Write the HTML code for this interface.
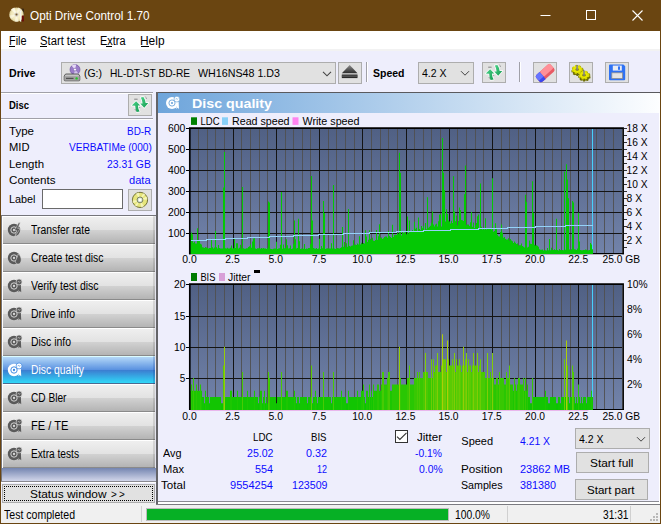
<!DOCTYPE html>
<html><head><meta charset="utf-8"><title>Opti Drive Control 1.70</title>
<style>
html,body{margin:0;padding:0;}
body{width:661px;height:524px;overflow:hidden;position:relative;background:#6a4511;font-family:"Liberation Sans",sans-serif;}
.t{position:absolute;white-space:nowrap;line-height:1;transform-origin:0 0;}
.r{position:absolute;box-sizing:border-box;}
svg{position:absolute;overflow:visible;}
svg text{font-family:"Liberation Sans",sans-serif;}
</style></head><body>
<div class="r" style="left:0px;top:0px;width:661px;height:524px;background:#6a4511;"></div>
<div class="t" style="left:30.10px;top:9.84px;font-size:12px;color:#fff;transform:scaleX(0.9792);">Opti Drive Control 1.70</div>
<svg style="left:8px;top:6px" width="18" height="18" viewBox="0 0 18 18">
<defs><radialGradient id="dg" cx="0.5" cy="0.5" r="0.5"><stop offset="0" stop-color="#fbf6dc"/><stop offset="0.7" stop-color="#f1e8bc"/><stop offset="1" stop-color="#d8cc98"/></radialGradient></defs>
<path d="M13.6 2.4 L16 2.8 V9.6 H13.6 Z" fill="#3a2814"/>
<circle cx="8.5" cy="8.6" r="7.2" fill="url(#dg)"/>
<path d="M8.5 8.6 L3 3.6 A7.4 7.4 0 0 1 6.4 1.6 Z" fill="#fffdf0" opacity="0.8"/>
<path d="M8.5 8.6 L10 1.5 A7.4 7.4 0 0 1 13 2.9 Z" fill="#fffdf0" opacity="0.6"/>
<path d="M8.5 8.6 L1.3 9.6 A7.4 7.4 0 0 0 2.8 13 Z" fill="#fffdf0" opacity="0.55"/>
<path d="M8.5 8.6 L6.6 15.6 A7.4 7.4 0 0 0 10.4 15.6 Z" fill="#fffdf0" opacity="0.6"/>
<circle cx="8.5" cy="8.6" r="2.1" fill="#d4d0c8"/><circle cx="8.5" cy="8.6" r="1" fill="#7a5a28"/>
<path d="M11.9 3.4 C11.6 5 11.8 6 12.2 6.6 L11.9 15.6 L13.2 15.8 L13.3 6.6 C13.8 6 13.9 5 13.6 3.2 L13.1 4.8 L12.5 4.8 Z" fill="#f4f4f4"/>
<rect x="13.8" y="9.4" width="2.1" height="6" rx="0.6" fill="#6c0c0c"/>
</svg>
<svg style="left:530px;top:0px" width="131" height="31" viewBox="0 0 131 31">
<path d="M10.5 15.5 H20.5" stroke="#fff" stroke-width="1" fill="none"/>
<rect x="56.5" y="10.5" width="9" height="9" stroke="#fff" stroke-width="1" fill="none"/>
<path d="M102.5 10.5 L112.5 20.5 M112.5 10.5 L102.5 20.5" stroke="#fff" stroke-width="1.1" fill="none"/>
</svg>
<div class="r" style="left:1px;top:31px;width:659px;height:19px;background:#fff;"></div>
<div class="r" style="left:1px;top:49px;width:659px;height:2px;background:#f2f2f2;"></div>
<div class="t" style="left:8.60px;top:35.44px;font-size:12px;color:#000;transform:scaleX(0.9051);">File</div>
<div class="t" style="left:40.30px;top:35.44px;font-size:12px;color:#000;transform:scaleX(0.9372);">Start test</div>
<div class="t" style="left:100.40px;top:35.44px;font-size:12px;color:#000;transform:scaleX(0.9105);">Extra</div>
<div class="t" style="left:140.40px;top:35.44px;font-size:12px;color:#000;transform:scaleX(0.9928);">Help</div>
<div class="r" style="left:9px;top:46px;width:6px;height:1px;background:#000;"></div>
<div class="r" style="left:40px;top:46px;width:7px;height:1px;background:#000;"></div>
<div class="r" style="left:106px;top:46px;width:6px;height:1px;background:#000;"></div>
<div class="r" style="left:141px;top:46px;width:8px;height:1px;background:#000;"></div>
<div class="r" style="left:1px;top:51px;width:659px;height:472px;background:#eeeefc;"></div>
<div class="t" style="left:9.30px;top:67.69px;font-size:11px;color:#000;font-weight:bold;transform:scaleX(0.9631);">Drive</div>
<div class="r" style="left:61px;top:62px;width:275px;height:22px;background:#e1e1e1;border:1px solid #adadad;"></div>
<div class="t" style="left:84.00px;top:68.49px;font-size:11px;color:#000;transform:scaleX(0.9505);">(G:)</div>
<div class="t" style="left:110.30px;top:68.49px;font-size:11px;color:#000;transform:scaleX(0.9240);">HL-DT-ST BD-RE</div>
<div class="t" style="left:197.50px;top:68.49px;font-size:11px;color:#000;transform:scaleX(0.9719);">WH16NS48 1.D3</div>
<svg style="left:322px;top:70px" width="10" height="7" viewBox="0 0 10 7"><path d="M1 1.8 L5 5.8 L9 1.8" stroke="#444" stroke-width="1.1" fill="none"/></svg>
<svg style="left:63px;top:63px" width="18" height="19" viewBox="0 0 18 19">
<circle cx="12" cy="6.6" r="5" fill="#9a7cc8" stroke="#6a4c9a" stroke-width="0.6"/>
<path d="M12 6.6 L8.6 2.8 A5 5 0 0 1 13.2 1.7 Z" fill="#e6daf6"/><path d="M12 6.6 L15.4 10.4 A5 5 0 0 1 10.8 11.5 Z" fill="#d4c4ee"/>
<circle cx="12" cy="6.6" r="1.4" fill="#fff" stroke="#6a4c9a" stroke-width="0.5"/>
<path d="M2.6 11 H15.4 L16.8 13 V17 a0.8 0.8 0 0 1 -0.8 0.8 H2 a0.8 0.8 0 0 1 -0.8 -0.8 V13 Z" fill="#c4c4c4" stroke="#505050" stroke-width="0.9"/>
<rect x="1.6" y="13.2" width="14.8" height="4.2" fill="#a0a0a0"/>
<rect x="3" y="14.8" width="7.5" height="1.2" fill="#505050"/>
<circle cx="13.6" cy="15.4" r="1.2" fill="#20c828"/>
</svg>
<div class="r" style="left:338px;top:62px;width:24px;height:22px;background:#e1e1e1;border:1px solid #adadad;"></div>
<svg style="left:338px;top:62px" width="24" height="22" viewBox="0 0 24 22"><defs><linearGradient id="ej" x1="0" y1="0" x2="0" y2="1"><stop offset="0" stop-color="#8c8c8c"/><stop offset="1" stop-color="#2c2c2c"/></linearGradient></defs><path d="M11.7 3 L19.5 11.3 H3.8 Z" fill="url(#ej)"/><rect x="3.8" y="12.5" width="15.7" height="3.6" fill="#2a2a2a"/><rect x="3.8" y="13.6" width="15.7" height="1" fill="#6a6a6a"/></svg>
<div class="r" style="left:366px;top:62px;width:1px;height:20px;background:#a0a0a8;"></div>
<div class="r" style="left:367px;top:62px;width:1px;height:20px;background:#fff;"></div>
<div class="t" style="left:373.00px;top:67.69px;font-size:11px;color:#000;font-weight:bold;transform:scaleX(0.9543);">Speed</div>
<div class="r" style="left:418px;top:62px;width:56px;height:22px;background:#e1e1e1;border:1px solid #adadad;"></div>
<div class="t" style="left:422.00px;top:67.69px;font-size:11px;color:#000;transform:scaleX(0.9539);">4.2 X</div>
<svg style="left:460px;top:70px" width="10" height="7" viewBox="0 0 10 7"><path d="M1 1.2 L5 5.2 L9 1.2" stroke="#444" stroke-width="1" fill="none"/></svg>
<div class="r" style="left:482px;top:62px;width:24px;height:21px;background:#e1e1e1;border:1px solid #adadad;"></div>
<svg style="left:482px;top:62px" width="24" height="21" viewBox="0 0 24 21"><defs><linearGradient id="ga" x1="0" y1="0" x2="1" y2="1"><stop offset="0" stop-color="#4cd48a"/><stop offset="1" stop-color="#149a50"/></linearGradient></defs><g stroke-linejoin="round"><path d="M8.1 7.2 L12.2 11.6 L9.9 11.6 Q10 15 11.6 17.6 L8.6 18 Q7.2 15 7.2 11.8 L3.8 11.6 Z M16.2 13.8 L12.2 9.6 L14.6 9.4 Q14.4 6 12.8 3.4 L15.4 3.1 Q17.4 6 17.6 9 L20.3 8.9 Z" fill="#fff" stroke="#fff" stroke-width="1.6" opacity="0.85"/><path d="M8.1 7.2 L12.2 11.6 L9.9 11.6 Q10 15 11.6 17.6 L8.6 18 Q7.2 15 7.2 11.8 L3.8 11.6 Z" fill="url(#ga)"/><path d="M16.2 13.8 L12.2 9.6 L14.6 9.4 Q14.4 6 12.8 3.4 L15.4 3.1 Q17.4 6 17.6 9 L20.3 8.9 Z" fill="url(#ga)"/><path d="M6.2 5.2 H9.6" stroke="#444" stroke-width="0.6"/><path d="M17.6 2.8 L18.6 4.8 M7 15 L8 17.6 M11.6 13.4 L12.2 14.2" stroke="#333" stroke-width="0.6" stroke-dasharray="0.8 0.8"/></g></svg>
<div class="r" style="left:519px;top:62px;width:1px;height:20px;background:#a0a0a8;"></div>
<div class="r" style="left:520px;top:62px;width:1px;height:20px;background:#fff;"></div>
<div class="r" style="left:533px;top:62px;width:24px;height:21px;background:#e1e1e1;border:1px solid #adadad;"></div>
<svg style="left:533px;top:62px" width="24" height="21" viewBox="0 0 24 21"><g transform="translate(12.2 11.2) rotate(-42)"><rect x="-9.8" y="-4.6" width="19.6" height="9.2" rx="2.4" fill="#e85a64"/><rect x="-3.4" y="-4.6" width="13.2" height="6.4" rx="1.6" fill="#ff9098"/><path d="M-7.4 -4.6 H-3.4 V4.6 H-7.4 A2.4 2.4 0 0 1 -9.8 2.2 V-2.2 A2.4 2.4 0 0 1 -7.4 -4.6 Z" fill="#3a48ee"/><path d="M-7.4 -4.6 H-3.4 V1.4 H-9.8 V-2.2 A2.4 2.4 0 0 1 -7.4 -4.6 Z" fill="#6674ff"/></g></svg>
<div class="r" style="left:569px;top:62px;width:24px;height:21px;background:#e1e1e1;border:1px solid #adadad;"></div>
<svg style="left:569px;top:62px" width="24" height="21" viewBox="0 0 24 21"><g><ellipse cx="8.6" cy="8.8" rx="5.4" ry="4.4" fill="#6e6e00" stroke="#6e6e00" stroke-width="1.6" stroke-dasharray="2 1.4"/><ellipse cx="15.4" cy="14.4" rx="5.4" ry="4.4" fill="#6e6e00" stroke="#6e6e00" stroke-width="1.6" stroke-dasharray="2 1.4"/><ellipse cx="8.2" cy="7.4" rx="4.6" ry="3.7" fill="#e8e800" stroke="#d8d800" stroke-width="1.8" stroke-dasharray="2 1.4"/><ellipse cx="15" cy="13" rx="4.6" ry="3.7" fill="#e8e800" stroke="#d8d800" stroke-width="1.8" stroke-dasharray="2 1.4"/><ellipse cx="8.2" cy="7.6" rx="1.8" ry="1.4" fill="#8a8a20"/><ellipse cx="15" cy="13.2" rx="1.8" ry="1.4" fill="#8a8a20"/><rect x="7.5" y="3.2" width="1.4" height="4.6" fill="#9a9a9a" stroke="#666" stroke-width="0.3"/><rect x="14.3" y="8.8" width="1.4" height="4.6" fill="#9a9a9a" stroke="#666" stroke-width="0.3"/></g></svg>
<div class="r" style="left:605px;top:62px;width:24px;height:21px;background:#e1e1e1;border:1px solid #adadad;"></div>
<svg style="left:605px;top:62px" width="24" height="21" viewBox="0 0 24 21"><path d="M5 2.4 H18.4 L20.2 4.2 V17.2 a1 1 0 0 1 -1 1 H5 a1 1 0 0 1 -1 -1 V3.4 a1 1 0 0 1 1 -1 Z" fill="#2f72f4"/><rect x="7.8" y="3.6" width="9" height="5" fill="#e8ecf4"/><rect x="13" y="4.4" width="2" height="3.4" fill="#2f72f4"/><rect x="6.8" y="10.8" width="10.6" height="5.6" fill="#e4e4e4" stroke="#909090" stroke-width="0.8"/></svg>
<div class="r" style="left:1px;top:92px;width:152px;height:1px;background:#a0a0a8;"></div>
<div class="r" style="left:1px;top:93px;width:152px;height:1px;background:#fff;"></div>
<div class="t" style="left:9.30px;top:99.69px;font-size:11px;color:#000;font-weight:bold;transform:scaleX(0.8608);">Disc</div>
<div class="r" style="left:128px;top:94px;width:24px;height:22px;background:#e1e1e1;border:1px solid #adadad;"></div>
<svg style="left:128px;top:94px" width="24" height="21" viewBox="0 0 24 21"><defs><linearGradient id="ga" x1="0" y1="0" x2="1" y2="1"><stop offset="0" stop-color="#4cd48a"/><stop offset="1" stop-color="#149a50"/></linearGradient></defs><g stroke-linejoin="round"><path d="M8.1 7.2 L12.2 11.6 L9.9 11.6 Q10 15 11.6 17.6 L8.6 18 Q7.2 15 7.2 11.8 L3.8 11.6 Z M16.2 13.8 L12.2 9.6 L14.6 9.4 Q14.4 6 12.8 3.4 L15.4 3.1 Q17.4 6 17.6 9 L20.3 8.9 Z" fill="#fff" stroke="#fff" stroke-width="1.6" opacity="0.85"/><path d="M8.1 7.2 L12.2 11.6 L9.9 11.6 Q10 15 11.6 17.6 L8.6 18 Q7.2 15 7.2 11.8 L3.8 11.6 Z" fill="url(#ga)"/><path d="M16.2 13.8 L12.2 9.6 L14.6 9.4 Q14.4 6 12.8 3.4 L15.4 3.1 Q17.4 6 17.6 9 L20.3 8.9 Z" fill="url(#ga)"/><path d="M6.2 5.2 H9.6" stroke="#444" stroke-width="0.6"/><path d="M17.6 2.8 L18.6 4.8 M7 15 L8 17.6 M11.6 13.4 L12.2 14.2" stroke="#333" stroke-width="0.6" stroke-dasharray="0.8 0.8"/></g></svg>
<div class="r" style="left:1px;top:118px;width:152px;height:1px;background:#a0a0a8;"></div>
<div class="r" style="left:1px;top:119px;width:152px;height:1px;background:#fff;"></div>
<div class="t" style="left:9.30px;top:125.69px;font-size:11px;color:#000;transform:scaleX(1.0484);">Type</div>
<div class="t" style="left:126.80px;top:125.69px;font-size:11px;color:#0c0cff;transform:scaleX(0.9037);">BD-R</div>
<div class="t" style="left:9.30px;top:141.69px;font-size:11px;color:#000;transform:scaleX(1.0167);">MID</div>
<div class="t" style="left:68.80px;top:141.69px;font-size:11px;color:#0c0cff;transform:scaleX(0.9173);">VERBATIMe (000)</div>
<div class="t" style="left:9.30px;top:158.69px;font-size:11px;color:#000;transform:scaleX(1.0404);">Length</div>
<div class="t" style="left:107.30px;top:158.69px;font-size:11px;color:#0c0cff;transform:scaleX(0.9425);">23.31 GB</div>
<div class="t" style="left:9.30px;top:174.69px;font-size:11px;color:#000;transform:scaleX(1.0562);">Contents</div>
<div class="t" style="left:129.00px;top:174.69px;font-size:11px;color:#0c0cff;transform:scaleX(1.0090);">data</div>
<div class="t" style="left:9.30px;top:193.99px;font-size:11px;color:#000;transform:scaleX(0.9847);">Label</div>
<div class="r" style="left:42px;top:189px;width:81px;height:20px;background:#fff;border:1px solid #6a6a6a;"></div>
<div class="r" style="left:128px;top:189px;width:24px;height:22px;background:#e1e1e1;border:1px solid #adadad;"></div>
<svg style="left:131px;top:191px" width="18" height="18" viewBox="0 0 18 18"><circle cx="9" cy="8.9" r="7.6" fill="#e6e67c" stroke="#66662c" stroke-width="0.9"/><path d="M9 8.9 L5 2.6 A7.4 7.4 0 0 1 8 1.5 Z M9 8.9 L13 15.2 A7.4 7.4 0 0 1 10 16.3 Z M9 8.9 L15.6 5.6 A7.4 7.4 0 0 1 16.4 8.4 Z M9 8.9 L2.4 12.2 A7.4 7.4 0 0 1 1.6 9.4 Z M9 8.9 L12.2 2.2 A7.4 7.4 0 0 1 14.2 3.6 Z M9 8.9 L5.8 15.6 A7.4 7.4 0 0 1 3.8 14.2 Z" fill="#fafac8" opacity="0.75"/><circle cx="9" cy="8.9" r="2.9" fill="#d8e4d0" stroke="#707858" stroke-width="0.9"/><circle cx="9" cy="8.9" r="1.4" fill="#fff"/></svg>
<div class="r" style="left:1px;top:215px;width:155px;height:267px;background:#74747a;"></div>
<div class="r" style="left:155px;top:216px;width:1px;height:252px;background:#e4e4ee;"></div>
<div class="r" style="left:2px;top:216px;width:153px;height:28px;border-left:1px solid #fff;border-right:2px solid rgba(0,0,0,0.10);background:linear-gradient(#fff 0,#fff 1px,#efefef 1px,#e2e2e2 14px,#d2d2d2 14px,#b4b4b4 27px,#8a8a8a 27px,#8a8a8a 28px);"></div>
<svg style="left:3.5999999999999996px;top:220.2px" width="20" height="20" viewBox="-10 -10 20 20"><g transform="scale(1.033)"><circle cx="0" cy="0" r="6" fill="#5a5a5a"/><circle cx="0" cy="0" r="3.1" fill="none" stroke="#d8d8d8" stroke-width="0.9"/><circle cx="0" cy="0" r="1.1" fill="#d8d8d8"/><path d="M4.5 -7 L0.5 0.5 L2.6 0.5 L0.8 6.5 L6 -1.5 L3.6 -1.5 L6 -7 Z" fill="#5a5a5a" stroke="#d8d8d8" stroke-width="0.5"/></g></svg>
<div class="t" style="left:31.30px;top:224.22px;font-size:12.5px;color:#000;transform:scaleX(0.8300);">Transfer rate</div>
<div class="r" style="left:2px;top:244px;width:153px;height:28px;border-left:1px solid #fff;border-right:2px solid rgba(0,0,0,0.10);background:linear-gradient(#fff 0,#fff 1px,#efefef 1px,#e2e2e2 14px,#d2d2d2 14px,#b4b4b4 27px,#8a8a8a 27px,#8a8a8a 28px);"></div>
<svg style="left:3.5999999999999996px;top:248.2px" width="20" height="20" viewBox="-10 -10 20 20"><g transform="scale(1.033)"><circle cx="0" cy="0" r="6" fill="#5a5a5a"/><circle cx="0" cy="0" r="3.1" fill="none" stroke="#d8d8d8" stroke-width="0.9"/><circle cx="0" cy="0" r="1.1" fill="#d8d8d8"/><path d="M4 -4 C7 -2 7.5 2 6.5 4 C5.5 6.5 2 6.5 1.5 4 C1 2 3 1 4 -4 Z" fill="#5a5a5a" stroke="#d8d8d8" stroke-width="0.6"/></g></svg>
<div class="t" style="left:31.30px;top:252.22px;font-size:12.5px;color:#000;transform:scaleX(0.8349);">Create test disc</div>
<div class="r" style="left:2px;top:272px;width:153px;height:28px;border-left:1px solid #fff;border-right:2px solid rgba(0,0,0,0.10);background:linear-gradient(#fff 0,#fff 1px,#efefef 1px,#e2e2e2 14px,#d2d2d2 14px,#b4b4b4 27px,#8a8a8a 27px,#8a8a8a 28px);"></div>
<svg style="left:3.5999999999999996px;top:276.2px" width="20" height="20" viewBox="-10 -10 20 20"><g transform="scale(1.033)"><circle cx="0" cy="0" r="6" fill="#5a5a5a"/><circle cx="0" cy="0" r="3.1" fill="none" stroke="#d8d8d8" stroke-width="0.9"/><circle cx="0" cy="0" r="1.1" fill="#d8d8d8"/><path d="M5.2 -1.6 L4.2 6 L5.6 4.8 L7 6 L6.6 -1.6 Z" fill="#5a5a5a"/><circle cx="4.9" cy="-3.9" r="2.9" fill="#5a5a5a" stroke="#d8d8d8" stroke-width="0.7"/><path d="M3.5 -3.6 L4.5 -4.8 L5.2 -3.4 L6.2 -4.6" stroke="#d8d8d8" stroke-width="0.5" fill="none"/></g></svg>
<div class="t" style="left:31.30px;top:280.22px;font-size:12.5px;color:#000;transform:scaleX(0.8377);">Verify test disc</div>
<div class="r" style="left:2px;top:300px;width:153px;height:28px;border-left:1px solid #fff;border-right:2px solid rgba(0,0,0,0.10);background:linear-gradient(#fff 0,#fff 1px,#efefef 1px,#e2e2e2 14px,#d2d2d2 14px,#b4b4b4 27px,#8a8a8a 27px,#8a8a8a 28px);"></div>
<svg style="left:3.5999999999999996px;top:304.2px" width="20" height="20" viewBox="-10 -10 20 20"><g transform="scale(1.033)"><circle cx="0" cy="0" r="6" fill="#5a5a5a"/><circle cx="0" cy="0" r="3.1" fill="none" stroke="#d8d8d8" stroke-width="0.9"/><circle cx="0" cy="0" r="1.1" fill="#d8d8d8"/><path d="M5.2 -1.6 L4.2 6 L5.6 4.8 L7 6 L6.6 -1.6 Z" fill="#5a5a5a"/><circle cx="4.9" cy="-3.9" r="2.9" fill="#5a5a5a" stroke="#d8d8d8" stroke-width="0.7"/><path d="M3.5 -3.6 L4.5 -4.8 L5.2 -3.4 L6.2 -4.6" stroke="#d8d8d8" stroke-width="0.5" fill="none"/></g></svg>
<div class="t" style="left:31.30px;top:308.22px;font-size:12.5px;color:#000;transform:scaleX(0.8334);">Drive info</div>
<div class="r" style="left:2px;top:328px;width:153px;height:28px;border-left:1px solid #fff;border-right:2px solid rgba(0,0,0,0.10);background:linear-gradient(#fff 0,#fff 1px,#efefef 1px,#e2e2e2 14px,#d2d2d2 14px,#b4b4b4 27px,#8a8a8a 27px,#8a8a8a 28px);"></div>
<svg style="left:3.5999999999999996px;top:332.2px" width="20" height="20" viewBox="-10 -10 20 20"><g transform="scale(1.033)"><circle cx="0" cy="0" r="6" fill="#5a5a5a"/><circle cx="0" cy="0" r="3.1" fill="none" stroke="#d8d8d8" stroke-width="0.9"/><circle cx="0" cy="0" r="1.1" fill="#d8d8d8"/><path d="M5.2 -1.6 L4.2 6 L5.6 4.8 L7 6 L6.6 -1.6 Z" fill="#5a5a5a"/><circle cx="4.9" cy="-3.9" r="2.9" fill="#5a5a5a" stroke="#d8d8d8" stroke-width="0.7"/><path d="M3.5 -3.6 L4.5 -4.8 L5.2 -3.4 L6.2 -4.6" stroke="#d8d8d8" stroke-width="0.5" fill="none"/></g></svg>
<div class="t" style="left:31.30px;top:336.22px;font-size:12.5px;color:#000;transform:scaleX(0.8346);">Disc info</div>
<div class="r" style="left:2px;top:356px;width:153px;height:28px;border-left:1px solid #c8f0ff;border-right:2px solid rgba(0,40,120,0.18);background:linear-gradient(#dcfcff 0,#dcfcff 1px,#b4d8f8 1px,#5890e0 14px,#3c7cd0 14px,#30d8f8 27px,#4a6a90 27px,#4a6a90 28px);"></div>
<svg style="left:3.5999999999999996px;top:360.2px" width="20" height="20" viewBox="-10 -10 20 20"><g transform="scale(1.033)"><circle cx="0" cy="0" r="6" fill="#fff"/><circle cx="0" cy="0" r="3.1" fill="none" stroke="#3a86e0" stroke-width="0.9"/><circle cx="0" cy="0" r="1.1" fill="#3a86e0"/><path d="M5.2 -1.6 L4.2 6 L5.6 4.8 L7 6 L6.6 -1.6 Z" fill="#fff"/><circle cx="4.9" cy="-3.9" r="2.9" fill="#fff" stroke="#3a86e0" stroke-width="0.7"/><path d="M3.5 -3.6 L4.5 -4.8 L5.2 -3.4 L6.2 -4.6" stroke="#3a86e0" stroke-width="0.5" fill="none"/></g></svg>
<div class="t" style="left:31.30px;top:364.22px;font-size:12.5px;color:#fff;transform:scaleX(0.8293);">Disc quality</div>
<div class="r" style="left:2px;top:384px;width:153px;height:28px;border-left:1px solid #fff;border-right:2px solid rgba(0,0,0,0.10);background:linear-gradient(#fff 0,#fff 1px,#efefef 1px,#e2e2e2 14px,#d2d2d2 14px,#b4b4b4 27px,#8a8a8a 27px,#8a8a8a 28px);"></div>
<svg style="left:3.5999999999999996px;top:388.2px" width="20" height="20" viewBox="-10 -10 20 20"><g transform="scale(1.033)"><circle cx="0" cy="0" r="6" fill="#5a5a5a"/><circle cx="0" cy="0" r="3.1" fill="none" stroke="#d8d8d8" stroke-width="0.9"/><circle cx="0" cy="0" r="1.1" fill="#d8d8d8"/><path d="M5.2 -1.6 L4.2 6 L5.6 4.8 L7 6 L6.6 -1.6 Z" fill="#5a5a5a"/><circle cx="4.9" cy="-3.9" r="2.9" fill="#5a5a5a" stroke="#d8d8d8" stroke-width="0.7"/><path d="M3.5 -3.6 L4.5 -4.8 L5.2 -3.4 L6.2 -4.6" stroke="#d8d8d8" stroke-width="0.5" fill="none"/></g></svg>
<div class="t" style="left:31.30px;top:392.22px;font-size:12.5px;color:#000;transform:scaleX(0.8113);">CD Bler</div>
<div class="r" style="left:2px;top:412px;width:153px;height:28px;border-left:1px solid #fff;border-right:2px solid rgba(0,0,0,0.10);background:linear-gradient(#fff 0,#fff 1px,#efefef 1px,#e2e2e2 14px,#d2d2d2 14px,#b4b4b4 27px,#8a8a8a 27px,#8a8a8a 28px);"></div>
<svg style="left:3.5999999999999996px;top:416.2px" width="20" height="20" viewBox="-10 -10 20 20"><g transform="scale(1.033)"><circle cx="0" cy="0" r="6" fill="#5a5a5a"/><circle cx="0" cy="0" r="3.1" fill="none" stroke="#d8d8d8" stroke-width="0.9"/><circle cx="0" cy="0" r="1.1" fill="#d8d8d8"/><path d="M5.2 -1.6 L4.2 6 L5.6 4.8 L7 6 L6.6 -1.6 Z" fill="#5a5a5a"/><circle cx="4.9" cy="-3.9" r="2.9" fill="#5a5a5a" stroke="#d8d8d8" stroke-width="0.7"/><path d="M3.5 -3.6 L4.5 -4.8 L5.2 -3.4 L6.2 -4.6" stroke="#d8d8d8" stroke-width="0.5" fill="none"/></g></svg>
<div class="t" style="left:31.30px;top:420.22px;font-size:12.5px;color:#000;transform:scaleX(0.8900);">FE / TE</div>
<div class="r" style="left:2px;top:440px;width:153px;height:28px;border-left:1px solid #fff;border-right:2px solid rgba(0,0,0,0.10);background:linear-gradient(#fff 0,#fff 1px,#efefef 1px,#e2e2e2 14px,#d2d2d2 14px,#b4b4b4 27px,#8a8a8a 27px,#8a8a8a 28px);"></div>
<svg style="left:3.5999999999999996px;top:444.2px" width="20" height="20" viewBox="-10 -10 20 20"><g transform="scale(1.033)"><circle cx="0" cy="0" r="6" fill="#5a5a5a"/><circle cx="0" cy="0" r="3.1" fill="none" stroke="#d8d8d8" stroke-width="0.9"/><circle cx="0" cy="0" r="1.1" fill="#d8d8d8"/><path d="M5.2 -1.6 L4.2 6 L5.6 4.8 L7 6 L6.6 -1.6 Z" fill="#5a5a5a"/><circle cx="4.9" cy="-3.9" r="2.9" fill="#5a5a5a" stroke="#d8d8d8" stroke-width="0.7"/><path d="M3.5 -3.6 L4.5 -4.8 L5.2 -3.4 L6.2 -4.6" stroke="#d8d8d8" stroke-width="0.5" fill="none"/></g></svg>
<div class="t" style="left:31.30px;top:448.22px;font-size:12.5px;color:#000;transform:scaleX(0.8130);">Extra tests</div>
<div class="r" style="left:2px;top:468px;width:154px;height:13px;background:linear-gradient(#7485b0,#d2d6ea);"></div>
<div class="r" style="left:1px;top:481px;width:155px;height:1px;background:#8a8a92;"></div>
<div class="r" style="left:1px;top:482px;width:155px;height:1px;background:#fff;"></div>
<div class="r" style="left:2px;top:484px;width:153px;height:19px;background:#e1e1e1;border:1px solid #adadad;"></div>
<div class="r" style="left:4px;top:486px;width:149px;height:15px;border:1px dotted #000;"></div>
<div class="t" style="left:30.00px;top:488.57px;font-size:11.5px;color:#000;transform:scaleX(1.0317);">Status window</div>
<div class="t" style="left:110.70px;top:488.57px;font-size:11.5px;color:#000;transform:scaleX(0.86);">&gt;</div>
<div class="t" style="left:118.50px;top:488.57px;font-size:11.5px;color:#000;transform:scaleX(0.86);">&gt;</div>
<div class="r" style="left:156px;top:92px;width:504px;height:1px;background:#5a5a5e;"></div>
<div class="r" style="left:156px;top:92px;width:2px;height:412px;background:#646468;"></div>
<div class="r" style="left:158px;top:93px;width:501px;height:20px;background:linear-gradient(90deg,#6ea5db,#fdfeff);"></div>
<div class="r" style="left:158px;top:113px;width:501px;height:388px;background:#eeeefc;"></div>
<div class="r" style="left:158px;top:501px;width:502px;height:1px;background:#8a8a92;"></div>
<div class="r" style="left:158px;top:502px;width:502px;height:2px;background:#fff;"></div>
<div class="r" style="left:156px;top:504px;width:504px;height:1px;background:#7a7a80;"></div>
<div class="r" style="left:659px;top:94px;width:1px;height:408px;background:#fff;"></div>
<div class="t" style="left:192.00px;top:96.57px;font-size:13.5px;color:#fff;font-weight:bold;transform:scaleX(1.0559);">Disc quality</div>
<svg style="left:162px;top:93px" width="20" height="20" viewBox="-10 -10 20 20"><g transform="scale(1.000)"><circle cx="0" cy="0" r="6" fill="#fff"/><circle cx="0" cy="0" r="3.1" fill="none" stroke="#6fa6da" stroke-width="0.9"/><circle cx="0" cy="0" r="1.1" fill="#6fa6da"/><path d="M5.2 -1.6 L4.2 6 L5.6 4.8 L7 6 L6.6 -1.6 Z" fill="#fff"/><circle cx="4.9" cy="-3.9" r="2.9" fill="#fff" stroke="#6fa6da" stroke-width="0.7"/><path d="M3.5 -3.6 L4.5 -4.8 L5.2 -3.4 L6.2 -4.6" stroke="#6fa6da" stroke-width="0.5" fill="none"/></g></svg>
<svg style="left:0;top:0" width="661" height="524" viewBox="0 0 661 524">
<defs><linearGradient id="pg" x1="0" y1="0" x2="0" y2="1"><stop offset="0" stop-color="#506084"/><stop offset="1" stop-color="#7283aa"/></linearGradient></defs>
<rect x="190.0" y="128.0" width="432.0" height="126.0" fill="url(#pg)"/>
<path d="M198.5 128.0V254.0M207.5 128.0V254.0M215.5 128.0V254.0M224.5 128.0V254.0M241.5 128.0V254.0M250.5 128.0V254.0M259.5 128.0V254.0M267.5 128.0V254.0M285.5 128.0V254.0M293.5 128.0V254.0M302.5 128.0V254.0M310.5 128.0V254.0M328.5 128.0V254.0M336.5 128.0V254.0M345.5 128.0V254.0M354.5 128.0V254.0M371.5 128.0V254.0M380.5 128.0V254.0M388.5 128.0V254.0M397.5 128.0V254.0M414.5 128.0V254.0M423.5 128.0V254.0M431.5 128.0V254.0M440.5 128.0V254.0M457.5 128.0V254.0M466.5 128.0V254.0M475.5 128.0V254.0M483.5 128.0V254.0M501.5 128.0V254.0M509.5 128.0V254.0M518.5 128.0V254.0M526.5 128.0V254.0M544.5 128.0V254.0M552.5 128.0V254.0M561.5 128.0V254.0M570.5 128.0V254.0M587.5 128.0V254.0M596.5 128.0V254.0M604.5 128.0V254.0M613.5 128.0V254.0" stroke="#505050" stroke-width="1" fill="none" opacity="0.9"/>
<path d="M233.5 128.0V254.0M276.5 128.0V254.0M319.5 128.0V254.0M362.5 128.0V254.0M406.5 128.0V254.0M449.5 128.0V254.0M492.5 128.0V254.0M535.5 128.0V254.0M578.5 128.0V254.0M190.0 149.5H622.0M190.0 170.5H622.0M190.0 191.5H622.0M190.0 212.5H622.0M190.0 233.5H622.0" stroke="#141414" stroke-width="1" fill="none"/>
<path d="M189.0 253.7H624.0" stroke="#000" stroke-width="1.2" fill="none"/>
<path d="M592.5 128.0V254.0" stroke="#48d0fa" stroke-width="1" fill="none"/>
<path d="M190.0 254.0V234.5H191.0V232.5H192.0V234.2H193.0V242.7H194.0V241.8H195.0V243.4H196.0V243.6H197.0V228.3H198.0V240.2H199.0V241.1H200.0V243.7H201.0V244.5H202.0V247.3H203.0V247.5H204.0V248.0H205.0V247.1H206.0V247.5H207.0V248.1H208.0V248.4H209.0V247.9H210.0V248.0H211.0V238.7H212.0V247.2H213.0V248.4H214.0V247.5H215.0V231.1H216.0V247.3H217.0V248.4H218.0V244.9H219.0V247.9H220.0V248.4H221.0V248.5H222.0V248.5H223.0V187.6H224.0V151.9H225.0V248.3H226.0V248.5H227.0V247.7H228.0V248.6H229.0V248.5H230.0V247.8H231.0V245.6H232.0V248.5H233.0V248.3H234.0V238.2H235.0V248.1H236.0V243.2H237.0V243.2H238.0V248.6H239.0V247.8H240.0V244.7H241.0V248.6H242.0V187.0H243.0V248.2H244.0V248.7H245.0V248.8H246.0V248.3H247.0V248.2H248.0V246.9H249.0V246.2H250.0V244.3H251.0V247.8H252.0V241.4H253.0V238.4H254.0V238.2H255.0V248.6H256.0V248.9H257.0V248.2H258.0V248.2H259.0V248.1H260.0V248.7H261.0V248.0H262.0V248.6H263.0V248.1H264.0V248.4H265.0V248.4H266.0V249.0H267.0V248.0H268.0V201.5H269.0V202.6H270.0V248.7H271.0V249.1H272.0V249.2H273.0V248.7H274.0V248.4H275.0V248.5H276.0V241.7H277.0V249.0H278.0V248.5H279.0V248.2H280.0V244.8H281.0V192.1H282.0V248.8H283.0V244.6H284.0V248.2H285.0V248.1H286.0V239.3H287.0V245.3H288.0V248.6H289.0V248.2H290.0V245.4H291.0V249.1H292.0V248.5H293.0V243.7H294.0V220.4H295.0V239.2H296.0V248.4H297.0V248.1H298.0V218.7H299.0V241.3H300.0V248.9H301.0V248.4H302.0V248.5H303.0V248.7H304.0V243.9H305.0V249.0H306.0V248.4H307.0V248.7H308.0V248.1H309.0V248.0H310.0V244.1H311.0V176.1H312.0V220.4H313.0V248.0H314.0V248.5H315.0V248.8H316.0V248.1H317.0V249.0H318.0V248.5H319.0V238.8H320.0V248.9H321.0V246.1H322.0V248.3H323.0V201.1H324.0V213.1H325.0V249.0H326.0V248.5H327.0V248.2H328.0V248.5H329.0V248.4H330.0V248.6H331.0V243.3H332.0V248.5H333.0V184.9H334.0V248.5H335.0V249.0H336.0V248.5H337.0V248.1H338.0V248.3H339.0V248.6H340.0V248.0H341.0V247.2H342.0V227.1H343.0V246.8H344.0V242.1H345.0V247.5H346.0V243.3H347.0V246.8H348.0V209.1H349.0V246.1H350.0V246.4H351.0V245.8H352.0V245.6H353.0V240.2H354.0V244.9H355.0V244.5H356.0V245.0H357.0V243.6H358.0V244.4H359.0V236.2H360.0V244.4H361.0V242.8H362.0V244.1H363.0V243.1H364.0V243.6H365.0V230.3H366.0V236.4H367.0V242.0H368.0V239.8H369.0V230.3H370.0V238.7H371.0V240.1H372.0V237.8H373.0V240.7H374.0V240.9H375.0V240.1H376.0V230.0H377.0V239.8H378.0V236.2H379.0V224.2H380.0V238.1H381.0V237.6H382.0V238.9H383.0V238.3H384.0V237.0H385.0V236.4H386.0V236.6H387.0V237.7H388.0V230.9H389.0V235.9H390.0V237.0H391.0V238.0H392.0V224.7H393.0V236.9H394.0V235.0H395.0V234.8H396.0V235.0H397.0V232.9H398.0V233.8H399.0V152.8H400.0V172.7H401.0V235.5H402.0V231.7H403.0V233.1H404.0V232.6H405.0V232.0H406.0V234.2H407.0V216.4H408.0V233.3H409.0V220.5H410.0V231.2H411.0V231.7H412.0V230.0H413.0V231.6H414.0V221.8H415.0V228.7H416.0V227.7H417.0V231.8H418.0V217.4H419.0V229.0H420.0V230.0H421.0V226.0H422.0V228.3H423.0V226.1H424.0V229.7H425.0V223.0H426.0V229.2H427.0V197.3H428.0V227.8H429.0V226.7H430.0V225.7H431.0V222.9H432.0V211.5H433.0V224.4H434.0V226.4H435.0V224.4H436.0V223.8H437.0V226.5H438.0V221.3H439.0V214.6H440.0V214.3H441.0V226.5H442.0V138.1H443.0V172.7H444.0V189.9H445.0V221.5H446.0V209.2H447.0V213.9H448.0V220.6H449.0V221.4H450.0V223.6H451.0V220.8H452.0V222.9H453.0V176.3H454.0V211.5H455.0V221.2H456.0V215.4H457.0V225.2H458.0V220.9H459.0V207.6H460.0V210.0H461.0V220.0H462.0V220.2H463.0V221.0H464.0V194.2H465.0V165.4H466.0V225.0H467.0V224.4H468.0V224.4H469.0V225.9H470.0V222.3H471.0V212.0H472.0V226.7H473.0V222.5H474.0V228.1H475.0V225.1H476.0V222.9H477.0V216.2H478.0V214.6H479.0V229.3H480.0V183.4H481.0V226.8H482.0V229.6H483.0V228.3H484.0V229.4H485.0V218.3H486.0V229.5H487.0V228.6H488.0V228.0H489.0V228.8H490.0V229.0H491.0V229.4H492.0V178.2H493.0V231.7H494.0V230.9H495.0V223.2H496.0V228.8H497.0V234.7H498.0V236.2H499.0V236.4H500.0V232.1H501.0V224.6H502.0V232.8H503.0V237.8H504.0V237.0H505.0V238.9H506.0V239.4H507.0V239.4H508.0V238.3H509.0V240.5H510.0V239.1H511.0V240.6H512.0V241.3H513.0V243.0H514.0V241.6H515.0V242.8H516.0V243.9H517.0V243.6H518.0V245.5H519.0V245.3H520.0V245.2H521.0V243.4H522.0V246.0H523.0V246.7H524.0V247.5H525.0V194.8H526.0V202.1H527.0V247.6H528.0V246.7H529.0V240.4H530.0V243.7H531.0V243.9H532.0V181.3H533.0V212.8H534.0V244.7H535.0V245.5H536.0V245.2H537.0V245.7H538.0V246.7H539.0V249.3H540.0V249.8H541.0V249.7H542.0V249.5H543.0V250.4H544.0V250.0H545.0V250.2H546.0V250.6H547.0V248.1H548.0V250.3H549.0V239.1H550.0V250.3H551.0V247.8H552.0V249.9H553.0V250.1H554.0V249.3H555.0V250.1H556.0V218.7H557.0V250.0H558.0V250.6H559.0V249.0H560.0V249.9H561.0V250.2H562.0V250.0H563.0V250.2H564.0V171.5H565.0V249.8H566.0V164.3H567.0V179.4H568.0V198.3H569.0V249.4H570.0V250.0H571.0V249.3H572.0V200.9H573.0V202.6H574.0V249.3H575.0V249.6H576.0V250.1H577.0V248.5H578.0V212.8H579.0V241.4H580.0V250.0H581.0V250.2H582.0V250.2H583.0V249.9H584.0V249.9H585.0V249.6H586.0V249.8H587.0V250.4H588.0V250.2H589.0V250.1H590.0V243.1H591.0V244.6H592.0V249.2H593.0V254.0Z" fill="#04c804"/>
<path d="M191 240.5H206V239.5H225V238.5H247V237.5H269V236.5H293V235.5H318V234.5H343V233.5H369V232.5H396V231.5H423V230.5H450V229.5H478V228.5H507V227.5H535V226.5H565V225.5H592.5" stroke="#94d2f8" stroke-width="1" fill="none" shape-rendering="crispEdges"/>
<path d="M189.8 254.3V128.1H623.1V254.3" stroke="#000" stroke-width="1.7" fill="none"/>
<path d="M186.0 233.5H190.0" stroke="#000" stroke-width="1"/>
<text x="168" y="236.8" font-size="10.1" textLength="17.4" lengthAdjust="spacingAndGlyphs">100</text>
<path d="M186.0 212.5H190.0" stroke="#000" stroke-width="1"/>
<text x="168" y="215.8" font-size="10.1" textLength="17.4" lengthAdjust="spacingAndGlyphs">200</text>
<path d="M186.0 191.5H190.0" stroke="#000" stroke-width="1"/>
<text x="168" y="194.8" font-size="10.1" textLength="17.4" lengthAdjust="spacingAndGlyphs">300</text>
<path d="M186.0 170.5H190.0" stroke="#000" stroke-width="1"/>
<text x="168" y="173.8" font-size="10.1" textLength="17.4" lengthAdjust="spacingAndGlyphs">400</text>
<path d="M186.0 149.5H190.0" stroke="#000" stroke-width="1"/>
<text x="168" y="152.8" font-size="10.1" textLength="17.4" lengthAdjust="spacingAndGlyphs">500</text>
<path d="M186.0 128.5H190.0" stroke="#000" stroke-width="1"/>
<text x="168" y="131.8" font-size="10.1" textLength="17.4" lengthAdjust="spacingAndGlyphs">600</text>
<path d="M624.0 247.5H627.0" stroke="#000" stroke-width="0.8"/>
<path d="M624.0 240.5H627.0" stroke="#000" stroke-width="0.8"/>
<path d="M624.0 233.5H627.0" stroke="#000" stroke-width="0.8"/>
<path d="M624.0 226.5H627.0" stroke="#000" stroke-width="0.8"/>
<path d="M624.0 219.5H627.0" stroke="#000" stroke-width="0.8"/>
<path d="M624.0 212.5H627.0" stroke="#000" stroke-width="0.8"/>
<path d="M624.0 205.5H627.0" stroke="#000" stroke-width="0.8"/>
<path d="M624.0 198.5H627.0" stroke="#000" stroke-width="0.8"/>
<path d="M624.0 191.5H627.0" stroke="#000" stroke-width="0.8"/>
<path d="M624.0 184.5H627.0" stroke="#000" stroke-width="0.8"/>
<path d="M624.0 177.5H627.0" stroke="#000" stroke-width="0.8"/>
<path d="M624.0 170.5H627.0" stroke="#000" stroke-width="0.8"/>
<path d="M624.0 163.5H627.0" stroke="#000" stroke-width="0.8"/>
<path d="M624.0 156.5H627.0" stroke="#000" stroke-width="0.8"/>
<path d="M624.0 149.5H627.0" stroke="#000" stroke-width="0.8"/>
<path d="M624.0 142.5H627.0" stroke="#000" stroke-width="0.8"/>
<path d="M624.0 135.5H627.0" stroke="#000" stroke-width="0.8"/>
<path d="M624.0 128.5H627.0" stroke="#000" stroke-width="0.8"/>
<text x="626.6" y="243.8" font-size="10.1" textLength="15.5" lengthAdjust="spacingAndGlyphs">2 X</text>
<text x="626.6" y="229.8" font-size="10.1" textLength="15.5" lengthAdjust="spacingAndGlyphs">4 X</text>
<text x="626.6" y="215.8" font-size="10.1" textLength="15.5" lengthAdjust="spacingAndGlyphs">6 X</text>
<text x="626.6" y="201.8" font-size="10.1" textLength="15.5" lengthAdjust="spacingAndGlyphs">8 X</text>
<text x="626.6" y="187.8" font-size="10.1" textLength="21" lengthAdjust="spacingAndGlyphs">10 X</text>
<text x="626.6" y="173.8" font-size="10.1" textLength="21" lengthAdjust="spacingAndGlyphs">12 X</text>
<text x="626.6" y="159.8" font-size="10.1" textLength="21" lengthAdjust="spacingAndGlyphs">14 X</text>
<text x="626.6" y="145.8" font-size="10.1" textLength="21" lengthAdjust="spacingAndGlyphs">16 X</text>
<text x="626.6" y="131.8" font-size="10.1" textLength="21" lengthAdjust="spacingAndGlyphs">18 X</text>
<text x="182.2" y="263.3" font-size="10.1" textLength="14.5" lengthAdjust="spacingAndGlyphs">0.0</text>
<text x="225.3" y="263.3" font-size="10.1" textLength="14.5" lengthAdjust="spacingAndGlyphs">2.5</text>
<text x="268.5" y="263.3" font-size="10.1" textLength="14.5" lengthAdjust="spacingAndGlyphs">5.0</text>
<text x="311.8" y="263.3" font-size="10.1" textLength="14.5" lengthAdjust="spacingAndGlyphs">7.5</text>
<text x="352.2" y="263.3" font-size="10.1" textLength="20" lengthAdjust="spacingAndGlyphs">10.0</text>
<text x="395.4" y="263.3" font-size="10.1" textLength="20" lengthAdjust="spacingAndGlyphs">12.5</text>
<text x="438.6" y="263.3" font-size="10.1" textLength="20" lengthAdjust="spacingAndGlyphs">15.0</text>
<text x="481.8" y="263.3" font-size="10.1" textLength="20" lengthAdjust="spacingAndGlyphs">17.5</text>
<text x="525.0" y="263.3" font-size="10.1" textLength="20" lengthAdjust="spacingAndGlyphs">20.0</text>
<text x="568.2" y="263.3" font-size="10.1" textLength="20" lengthAdjust="spacingAndGlyphs">22.5</text>
<text x="602.5" y="263.3" font-size="10.1" textLength="37.5" lengthAdjust="spacingAndGlyphs">25.0 GB</text>
<rect x="191" y="117.3" width="6" height="7.6" fill="#008000"/><text x="200.6" y="124.7" font-size="10.1" textLength="19" lengthAdjust="spacingAndGlyphs">LDC</text>
<rect x="222" y="117.3" width="6" height="7.6" fill="#88d0f8"/><text x="232" y="124.7" font-size="10.1" textLength="57.5" lengthAdjust="spacingAndGlyphs">Read speed</text>
<rect x="292.5" y="117.3" width="6" height="7.6" fill="#ff84f0"/><text x="302.5" y="124.7" font-size="10.1" textLength="57" lengthAdjust="spacingAndGlyphs">Write speed</text>
<rect x="190.0" y="284.0" width="432.0" height="125.5" fill="url(#pg)"/>
<path d="M198.5 284.0V409.5M207.5 284.0V409.5M215.5 284.0V409.5M224.5 284.0V409.5M241.5 284.0V409.5M250.5 284.0V409.5M259.5 284.0V409.5M267.5 284.0V409.5M285.5 284.0V409.5M293.5 284.0V409.5M302.5 284.0V409.5M310.5 284.0V409.5M328.5 284.0V409.5M336.5 284.0V409.5M345.5 284.0V409.5M354.5 284.0V409.5M371.5 284.0V409.5M380.5 284.0V409.5M388.5 284.0V409.5M397.5 284.0V409.5M414.5 284.0V409.5M423.5 284.0V409.5M431.5 284.0V409.5M440.5 284.0V409.5M457.5 284.0V409.5M466.5 284.0V409.5M475.5 284.0V409.5M483.5 284.0V409.5M501.5 284.0V409.5M509.5 284.0V409.5M518.5 284.0V409.5M526.5 284.0V409.5M544.5 284.0V409.5M552.5 284.0V409.5M561.5 284.0V409.5M570.5 284.0V409.5M587.5 284.0V409.5M596.5 284.0V409.5M604.5 284.0V409.5M613.5 284.0V409.5" stroke="#505050" stroke-width="1" fill="none" opacity="0.9"/>
<path d="M233.5 284.0V409.5M276.5 284.0V409.5M319.5 284.0V409.5M362.5 284.0V409.5M406.5 284.0V409.5M449.5 284.0V409.5M492.5 284.0V409.5M535.5 284.0V409.5M578.5 284.0V409.5M190.0 316.5H622.0M190.0 347.5H622.0M190.0 378.5H622.0" stroke="#141414" stroke-width="1" fill="none"/>
<path d="M189.0 409.5H624.0" stroke="#000" stroke-width="1.2" fill="none"/>
<path d="M592.5 284.0V409.5" stroke="#48d0fa" stroke-width="1" fill="none"/>
<path d="M204.0 410.0v-6.8h1.0v6.8zM209.0 410.0v-6.8h1.0v6.8zM221.0 410.0v-6.8h2.0v6.8zM258.0 410.0v-6.8h1.0v6.8zM262.0 410.0v-6.8h1.0v6.8zM265.0 410.0v-6.8h1.0v6.8zM267.0 410.0v-6.8h1.0v6.8zM276.0 410.0v-6.8h1.0v6.8zM296.0 410.0v-6.8h1.0v6.8zM299.0 410.0v-6.8h1.0v6.8zM307.0 410.0v-6.8h1.0v6.8zM312.0 410.0v-6.8h1.0v6.8zM317.0 410.0v-6.8h1.0v6.8zM331.0 410.0v-6.8h1.0v6.8zM346.0 410.0v-6.8h2.0v6.8zM365.0 410.0v-6.8h1.0v6.8zM530.0 410.0v-6.8h2.0v6.8zM548.0 410.0v-6.8h2.0v6.8zM556.0 410.0v-6.8h2.0v6.8zM560.0 410.0v-6.8h1.0v6.8zM569.0 410.0v-6.8h1.0v6.8zM575.0 410.0v-6.8h1.0v6.8zM577.0 410.0v-6.8h1.0v6.8zM580.0 410.0v-6.8h1.0v6.8zM582.0 410.0v-6.8h1.0v6.8zM586.0 410.0v-6.8h1.0v6.8z" fill="#0cc402"/>
<path d="M202.0 410.0v-13.1h2.0v13.1zM206.0 410.0v-13.1h3.0v13.1zM210.0 410.0v-13.1h11.0v13.1zM225.0 410.0v-13.1h5.0v13.1zM232.0 410.0v-13.1h5.0v13.1zM238.0 410.0v-13.1h4.0v13.1zM243.0 410.0v-13.1h4.0v13.1zM248.0 410.0v-13.1h6.0v13.1zM255.0 410.0v-13.1h3.0v13.1zM259.0 410.0v-13.1h1.0v13.1zM263.0 410.0v-13.1h1.0v13.1zM266.0 410.0v-13.1h1.0v13.1zM270.0 410.0v-13.1h6.0v13.1zM277.0 410.0v-13.1h4.0v13.1zM282.0 410.0v-13.1h4.0v13.1zM288.0 410.0v-13.1h6.0v13.1zM295.0 410.0v-13.1h1.0v13.1zM297.0 410.0v-13.1h2.0v13.1zM300.0 410.0v-13.1h7.0v13.1zM308.0 410.0v-13.1h3.0v13.1zM313.0 410.0v-13.1h2.0v13.1zM316.0 410.0v-13.1h1.0v13.1zM318.0 410.0v-13.1h5.0v13.1zM324.0 410.0v-13.1h7.0v13.1zM332.0 410.0v-13.1h1.0v13.1zM334.0 410.0v-13.1h7.0v13.1zM342.0 410.0v-13.1h4.0v13.1zM349.0 410.0v-13.1h8.0v13.1zM358.0 410.0v-13.1h3.0v13.1zM364.0 410.0v-13.1h1.0v13.1zM368.0 410.0v-13.1h1.0v13.1zM370.0 410.0v-13.1h1.0v13.1zM372.0 410.0v-13.1h1.0v13.1zM528.0 410.0v-13.1h2.0v13.1zM533.0 410.0v-13.1h12.0v13.1zM546.0 410.0v-13.1h2.0v13.1zM550.0 410.0v-13.1h6.0v13.1zM558.0 410.0v-13.1h2.0v13.1zM561.0 410.0v-13.1h3.0v13.1zM565.0 410.0v-13.1h1.0v13.1zM568.0 410.0v-13.1h1.0v13.1zM570.0 410.0v-13.1h2.0v13.1zM574.0 410.0v-13.1h1.0v13.1zM576.0 410.0v-13.1h1.0v13.1zM579.0 410.0v-13.1h1.0v13.1zM581.0 410.0v-13.1h1.0v13.1zM583.0 410.0v-13.1h3.0v13.1zM587.0 410.0v-13.1h4.0v13.1zM592.0 410.0v-13.1h1.0v13.1z" fill="#12c502"/>
<path d="M190.0 410.0v-19.3h1.0v19.3zM192.0 410.0v-19.3h1.0v19.3zM194.0 410.0v-19.3h2.0v19.3zM197.0 410.0v-19.3h3.0v19.3zM201.0 410.0v-19.3h1.0v19.3zM205.0 410.0v-19.3h1.0v19.3zM230.0 410.0v-19.3h2.0v19.3zM237.0 410.0v-19.3h1.0v19.3zM247.0 410.0v-19.3h1.0v19.3zM254.0 410.0v-19.3h1.0v19.3zM260.0 410.0v-19.3h2.0v19.3zM264.0 410.0v-19.3h1.0v19.3zM286.0 410.0v-19.3h2.0v19.3zM294.0 410.0v-19.3h1.0v19.3zM315.0 410.0v-19.3h1.0v19.3zM341.0 410.0v-19.3h1.0v19.3zM348.0 410.0v-19.3h1.0v19.3zM357.0 410.0v-19.3h1.0v19.3zM361.0 410.0v-19.3h2.0v19.3zM366.0 410.0v-19.3h2.0v19.3zM371.0 410.0v-19.3h1.0v19.3zM374.0 410.0v-19.3h3.0v19.3zM379.0 410.0v-19.3h2.0v19.3zM390.0 410.0v-19.3h2.0v19.3zM513.0 410.0v-19.3h1.0v19.3zM516.0 410.0v-19.3h1.0v19.3zM524.0 410.0v-19.3h1.0v19.3zM526.0 410.0v-19.3h1.0v19.3zM545.0 410.0v-19.3h1.0v19.3zM591.0 410.0v-19.3h1.0v19.3z" fill="#1cc602"/>
<path d="M191.0 410.0v-25.6h1.0v25.6zM196.0 410.0v-25.6h1.0v25.6zM200.0 410.0v-25.6h1.0v25.6zM363.0 410.0v-25.6h1.0v25.6zM369.0 410.0v-25.6h1.0v25.6zM373.0 410.0v-25.6h1.0v25.6zM377.0 410.0v-25.6h2.0v25.6zM381.0 410.0v-25.6h1.0v25.6zM384.0 410.0v-25.6h3.0v25.6zM392.0 410.0v-25.6h7.0v25.6zM401.0 410.0v-25.6h6.0v25.6zM410.0 410.0v-25.6h4.0v25.6zM494.0 410.0v-25.6h2.0v25.6zM498.0 410.0v-25.6h1.0v25.6zM504.0 410.0v-25.6h2.0v25.6zM510.0 410.0v-25.6h3.0v25.6zM515.0 410.0v-25.6h1.0v25.6zM517.0 410.0v-25.6h1.0v25.6zM520.0 410.0v-25.6h3.0v25.6zM527.0 410.0v-25.6h1.0v25.6zM578.0 410.0v-25.6h1.0v25.6z" fill="#29c703"/>
<path d="M193.0 410.0v-31.9h1.0v31.9zM269.0 410.0v-31.9h1.0v31.9zM387.0 410.0v-31.9h1.0v31.9zM400.0 410.0v-31.9h1.0v31.9zM407.0 410.0v-31.9h2.0v31.9zM414.0 410.0v-31.9h3.0v31.9zM418.0 410.0v-31.9h1.0v31.9zM420.0 410.0v-31.9h3.0v31.9zM428.0 410.0v-31.9h3.0v31.9zM432.0 410.0v-31.9h1.0v31.9zM485.0 410.0v-31.9h2.0v31.9zM488.0 410.0v-31.9h2.0v31.9zM491.0 410.0v-31.9h1.0v31.9zM493.0 410.0v-31.9h1.0v31.9zM496.0 410.0v-31.9h2.0v31.9zM500.0 410.0v-31.9h4.0v31.9zM507.0 410.0v-31.9h2.0v31.9zM514.0 410.0v-31.9h1.0v31.9zM518.0 410.0v-31.9h2.0v31.9zM523.0 410.0v-31.9h1.0v31.9zM525.0 410.0v-31.9h1.0v31.9zM532.0 410.0v-31.9h1.0v31.9z" fill="#38c803"/>
<path d="M242.0 410.0v-38.1h1.0v38.1zM268.0 410.0v-38.1h1.0v38.1zM281.0 410.0v-38.1h1.0v38.1zM323.0 410.0v-38.1h1.0v38.1zM333.0 410.0v-38.1h1.0v38.1zM382.0 410.0v-38.1h2.0v38.1zM388.0 410.0v-38.1h2.0v38.1zM417.0 410.0v-38.1h1.0v38.1zM419.0 410.0v-38.1h1.0v38.1zM423.0 410.0v-38.1h2.0v38.1zM426.0 410.0v-38.1h2.0v38.1zM434.0 410.0v-38.1h1.0v38.1zM438.0 410.0v-38.1h3.0v38.1zM446.0 410.0v-38.1h1.0v38.1zM455.0 410.0v-38.1h1.0v38.1zM461.0 410.0v-38.1h1.0v38.1zM467.0 410.0v-38.1h1.0v38.1zM471.0 410.0v-38.1h1.0v38.1zM478.0 410.0v-38.1h1.0v38.1zM481.0 410.0v-38.1h4.0v38.1zM490.0 410.0v-38.1h1.0v38.1zM499.0 410.0v-38.1h1.0v38.1zM506.0 410.0v-38.1h1.0v38.1zM573.0 410.0v-38.1h1.0v38.1z" fill="#48ca04"/>
<path d="M223.0 410.0v-44.4h1.0v44.4zM311.0 410.0v-44.4h1.0v44.4zM409.0 410.0v-44.4h1.0v44.4zM435.0 410.0v-44.4h2.0v44.4zM441.0 410.0v-44.4h1.0v44.4zM449.0 410.0v-44.4h3.0v44.4zM453.0 410.0v-44.4h1.0v44.4zM457.0 410.0v-44.4h2.0v44.4zM460.0 410.0v-44.4h1.0v44.4zM462.0 410.0v-44.4h1.0v44.4zM464.0 410.0v-44.4h1.0v44.4zM469.0 410.0v-44.4h2.0v44.4zM472.0 410.0v-44.4h1.0v44.4zM474.0 410.0v-44.4h3.0v44.4zM479.0 410.0v-44.4h1.0v44.4zM509.0 410.0v-44.4h1.0v44.4zM567.0 410.0v-44.4h1.0v44.4zM572.0 410.0v-44.4h1.0v44.4z" fill="#5acb04"/>
<path d="M431.0 410.0v-50.7h1.0v50.7zM433.0 410.0v-50.7h1.0v50.7zM443.0 410.0v-50.7h3.0v50.7zM448.0 410.0v-50.7h1.0v50.7zM452.0 410.0v-50.7h1.0v50.7zM456.0 410.0v-50.7h1.0v50.7zM459.0 410.0v-50.7h1.0v50.7zM465.0 410.0v-50.7h1.0v50.7zM468.0 410.0v-50.7h1.0v50.7zM480.0 410.0v-50.7h1.0v50.7zM564.0 410.0v-50.7h1.0v50.7z" fill="#6dcc04"/>
<path d="M425.0 410.0v-57.0h1.0v57.0zM437.0 410.0v-57.0h1.0v57.0zM454.0 410.0v-57.0h1.0v57.0zM466.0 410.0v-57.0h1.0v57.0zM473.0 410.0v-57.0h1.0v57.0zM477.0 410.0v-57.0h1.0v57.0zM487.0 410.0v-57.0h1.0v57.0zM492.0 410.0v-57.0h1.0v57.0z" fill="#81cd05"/>
<path d="M224.0 410.0v-63.2h1.0v63.2zM399.0 410.0v-63.2h1.0v63.2zM463.0 410.0v-63.2h1.0v63.2z" fill="#96ce05"/>
<path d="M447.0 410.0v-69.5h1.0v69.5zM566.0 410.0v-69.5h1.0v69.5z" fill="#acd006"/>
<path d="M442.0 410.0v-75.8h1.0v75.8z" fill="#acd006"/>
<path d="M189.8 410.0V284.1H623.1V410.0" stroke="#000" stroke-width="1.7" fill="none"/>
<path d="M186.0 378.5H190.0" stroke="#000" stroke-width="1"/>
<text x="179.8" y="382.0" font-size="10.1" textLength="5.6" lengthAdjust="spacingAndGlyphs">5</text>
<path d="M186.0 347.5H190.0" stroke="#000" stroke-width="1"/>
<text x="173.9" y="351.0" font-size="10.1" textLength="11.5" lengthAdjust="spacingAndGlyphs">10</text>
<path d="M186.0 316.5H190.0" stroke="#000" stroke-width="1"/>
<text x="173.9" y="320.0" font-size="10.1" textLength="11.5" lengthAdjust="spacingAndGlyphs">15</text>
<path d="M186.0 284.5H190.0" stroke="#000" stroke-width="1"/>
<text x="173.9" y="288.0" font-size="10.1" textLength="11.5" lengthAdjust="spacingAndGlyphs">20</text>
<text x="627" y="388.2" font-size="10.1" textLength="15" lengthAdjust="spacingAndGlyphs">2%</text>
<text x="627" y="363.1" font-size="10.1" textLength="15" lengthAdjust="spacingAndGlyphs">4%</text>
<text x="627" y="338.0" font-size="10.1" textLength="15" lengthAdjust="spacingAndGlyphs">6%</text>
<text x="627" y="312.9" font-size="10.1" textLength="15" lengthAdjust="spacingAndGlyphs">8%</text>
<text x="627" y="287.8" font-size="10.1" textLength="20.5" lengthAdjust="spacingAndGlyphs">10%</text>
<text x="182.2" y="419.7" font-size="10.1" textLength="14.5" lengthAdjust="spacingAndGlyphs">0.0</text>
<text x="225.3" y="419.7" font-size="10.1" textLength="14.5" lengthAdjust="spacingAndGlyphs">2.5</text>
<text x="268.5" y="419.7" font-size="10.1" textLength="14.5" lengthAdjust="spacingAndGlyphs">5.0</text>
<text x="311.8" y="419.7" font-size="10.1" textLength="14.5" lengthAdjust="spacingAndGlyphs">7.5</text>
<text x="352.2" y="419.7" font-size="10.1" textLength="20" lengthAdjust="spacingAndGlyphs">10.0</text>
<text x="395.4" y="419.7" font-size="10.1" textLength="20" lengthAdjust="spacingAndGlyphs">12.5</text>
<text x="438.6" y="419.7" font-size="10.1" textLength="20" lengthAdjust="spacingAndGlyphs">15.0</text>
<text x="481.8" y="419.7" font-size="10.1" textLength="20" lengthAdjust="spacingAndGlyphs">17.5</text>
<text x="525.0" y="419.7" font-size="10.1" textLength="20" lengthAdjust="spacingAndGlyphs">20.0</text>
<text x="568.2" y="419.7" font-size="10.1" textLength="20" lengthAdjust="spacingAndGlyphs">22.5</text>
<text x="602.5" y="419.7" font-size="10.1" textLength="37.5" lengthAdjust="spacingAndGlyphs">25.0 GB</text>
<rect x="191" y="273" width="6" height="8" fill="#007c00"/><text x="200.4" y="281" font-size="10.1" textLength="15" lengthAdjust="spacingAndGlyphs">BIS</text>
<rect x="219" y="273" width="6" height="8" fill="#d8a0d8"/><text x="228" y="281" font-size="10.1" textLength="22.5" lengthAdjust="spacingAndGlyphs">Jitter</text>
<rect x="254" y="270" width="6" height="3" fill="#000"/>
<rect x="190.5" y="410" width="398" height="0.8" fill="#e8a8e8"/>
</svg>
<div class="t" style="left:252.50px;top:431.69px;font-size:11px;color:#000;transform:scaleX(0.8862);">LDC</div>
<div class="t" style="left:311.10px;top:431.69px;font-size:11px;color:#000;transform:scaleX(0.8742);">BIS</div>
<div class="t" style="left:163.00px;top:447.69px;font-size:11px;color:#000;transform:scaleX(0.9864);">Avg</div>
<div class="t" style="left:163.30px;top:463.69px;font-size:11px;color:#000;transform:scaleX(1.0106);">Max</div>
<div class="t" style="left:160.80px;top:479.69px;font-size:11px;color:#000;transform:scaleX(1.0545);">Total</div>
<div class="t" style="left:246.50px;top:447.69px;font-size:11px;color:#0c0cff;transform:scaleX(0.9628);">25.02</div>
<div class="t" style="left:255.00px;top:463.69px;font-size:11px;color:#0c0cff;transform:scaleX(0.9809);">554</div>
<div class="t" style="left:230.00px;top:479.69px;font-size:11px;color:#0c0cff;transform:scaleX(1.0042);">9554254</div>
<div class="t" style="left:306.30px;top:447.69px;font-size:11px;color:#0c0cff;transform:scaleX(0.9810);">0.32</div>
<div class="t" style="left:317.30px;top:463.69px;font-size:11px;color:#0c0cff;transform:scaleX(0.8174);">12</div>
<div class="t" style="left:291.80px;top:479.69px;font-size:11px;color:#0c0cff;transform:scaleX(0.9672);">123509</div>
<div class="r" style="left:395px;top:430px;width:13px;height:13px;background:#fff;border:1px solid #333;"></div>
<svg style="left:395px;top:430px" width="13" height="13" viewBox="0 0 13 13"><path d="M2 6.6 L4.9 9.5 L11.5 2.9" stroke="#333" stroke-width="1.1" fill="none"/></svg>
<div class="t" style="left:417.00px;top:431.69px;font-size:11px;color:#000;transform:scaleX(1.0489);">Jitter</div>
<div class="t" style="left:415.20px;top:447.69px;font-size:11px;color:#0c0cff;transform:scaleX(0.9397);">-0.1%</div>
<div class="t" style="left:418.50px;top:463.69px;font-size:11px;color:#0c0cff;transform:scaleX(0.9453);">0.0%</div>
<div class="t" style="left:461.30px;top:435.69px;font-size:11px;color:#000;">Speed</div>
<div class="t" style="left:461.30px;top:463.69px;font-size:11px;color:#000;transform:scaleX(1.0605);">Position</div>
<div class="t" style="left:461.30px;top:479.69px;font-size:11px;color:#000;transform:scaleX(0.9697);">Samples</div>
<div class="t" style="left:520.00px;top:435.69px;font-size:11px;color:#0c0cff;transform:scaleX(0.9434);">4.21 X</div>
<div class="t" style="left:520.00px;top:463.69px;font-size:11px;color:#0c0cff;">23862 MB</div>
<div class="t" style="left:520.00px;top:479.69px;font-size:11px;color:#0c0cff;transform:scaleX(0.9809);">381380</div>
<div class="r" style="left:575px;top:428px;width:75px;height:21px;background:#e1e1e1;border:1px solid #adadad;"></div>
<div class="t" style="left:579.00px;top:433.99px;font-size:11px;color:#000;transform:scaleX(0.9539);">4.2 X</div>
<svg style="left:636px;top:436px" width="10" height="7" viewBox="0 0 10 7"><path d="M1 1.2 L5 5.2 L9 1.2" stroke="#444" stroke-width="1" fill="none"/></svg>
<div class="r" style="left:576px;top:452px;width:73px;height:21px;background:#e1e1e1;border:1px solid #adadad;"></div>
<div class="t" style="left:590.20px;top:457.79px;font-size:11px;color:#000;transform:scaleX(1.0782);">Start full</div>
<div class="r" style="left:575px;top:479px;width:73px;height:21px;background:#e1e1e1;border:1px solid #adadad;"></div>
<div class="t" style="left:587.00px;top:484.69px;font-size:11px;color:#000;transform:scaleX(1.0500);">Start part</div>
<div class="r" style="left:1px;top:505px;width:659px;height:18px;background:#f0f0f0;"></div>
<div class="r" style="left:1px;top:503px;width:155px;height:2px;background:#f0f0f0;"></div>
<div class="t" style="left:4.20px;top:509.02px;font-size:12.5px;color:#000;transform:scaleX(0.8446);">Test completed</div>
<div class="r" style="left:141px;top:506px;width:1px;height:16px;background:#d0d0d0;"></div>
<div class="r" style="left:146px;top:508px;width:303px;height:13px;background:#e6e6e6;border:1px solid #bcbcbc;"></div>
<div class="r" style="left:147px;top:509px;width:300.5px;height:11px;background:#06b025;"></div>
<div class="t" style="left:454.50px;top:509.02px;font-size:12.5px;color:#000;transform:scaleX(0.8256);">100.0%</div>
<div class="r" style="left:507px;top:506px;width:1px;height:16px;background:#d0d0d0;"></div>
<div class="t" style="left:602.50px;top:509.02px;font-size:12.5px;color:#000;transform:scaleX(0.8153);">31:31</div>
<div class="r" style="left:630px;top:506px;width:1px;height:16px;background:#d0d0d0;"></div>
<svg style="left:648px;top:511px" width="12" height="12" viewBox="0 0 12 12"><g fill="#b8b8b8"><rect x="8" y="8" width="2" height="2"/><rect x="8" y="5" width="2" height="2"/><rect x="8" y="2" width="2" height="2"/><rect x="5" y="8" width="2" height="2"/><rect x="5" y="5" width="2" height="2"/><rect x="2" y="8" width="2" height="2"/></g></svg>
</body></html>
